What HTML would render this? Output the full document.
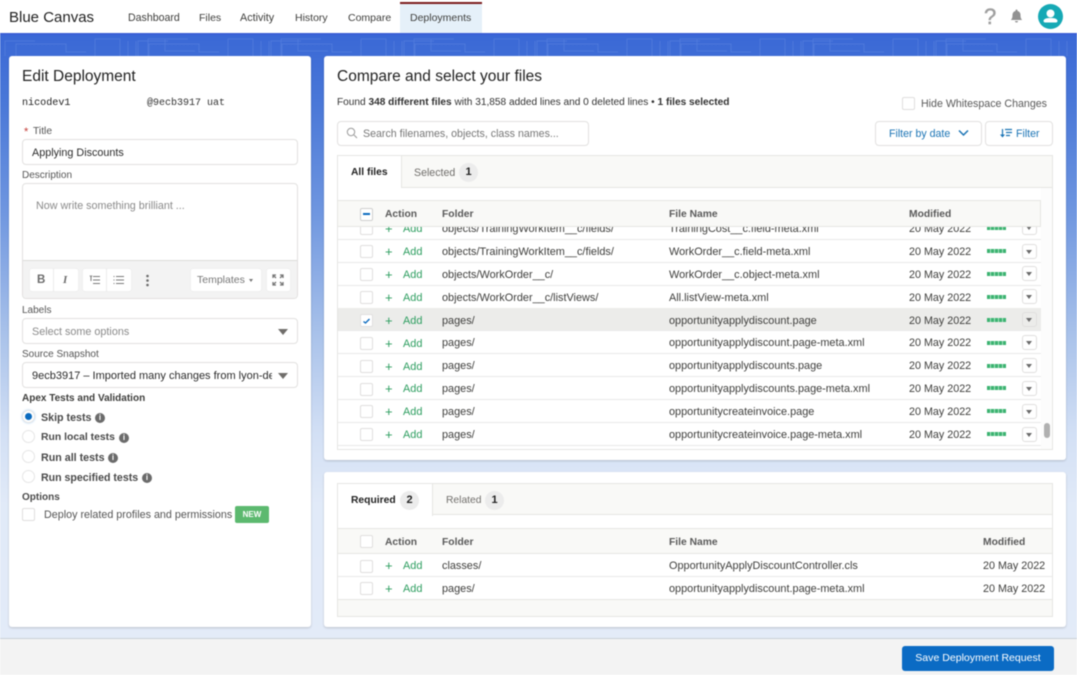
<!DOCTYPE html>
<html><head><meta charset="utf-8"><style>
*{box-sizing:border-box}
html,body{margin:0;padding:0;background:#fff}
#w{width:1077px;height:675px;position:relative;overflow:hidden;font-family:"Liberation Sans",sans-serif;font-size:10.9px;color:#3e3e3c;background:#fff;filter:blur(.45px)}
body{width:1077px;height:675px;overflow:hidden}
.a,.t{position:absolute}
.t{white-space:nowrap;line-height:14px}
.b{font-weight:bold}
.box{position:absolute;background:#fff;border:1px solid #e2e1e0;border-radius:4px}
.cb{position:absolute;width:13px;height:13px;background:#fff;border:1px solid #e0dfde;border-radius:2px}
.row{position:absolute;left:338px;width:703px;height:23px;border-bottom:1px solid #e8e8e8;background:#fff}
.plus{position:absolute;color:#2e9e60;font-size:13px;line-height:14px}
.add{color:#2e9e60}
.dt{font-size:10.75px}
.dots{position:absolute;left:987px;width:19px;height:4px;background:repeating-linear-gradient(90deg,#3cb371 0 3px,#a5dfbf 3px 4px)}
.dd{position:absolute;left:1022px;width:15px;height:15px;background:#fff;border:1px solid #e0dfde;border-radius:3px}
.dd:after{content:"";position:absolute;left:3px;top:5px;border-left:3.5px solid transparent;border-right:3.5px solid transparent;border-top:4px solid #6b6b6b}
.arrow{position:absolute;border-left:5.500px solid transparent;border-right:5.500px solid transparent;border-top:6px solid #706e6b}
.radio{position:absolute;left:22px;width:13px;height:13px;border-radius:50%;background:#fff;border:1px solid #e6e6e6}
.i{position:absolute;width:10px;height:10px;border-radius:50%;background:#6b6b6b;color:#fff;font-size:8px;line-height:10px;text-align:center;font-weight:bold}
.pill{position:absolute;width:19px;height:19px;border-radius:50%;background:#ececec;color:#222;font-weight:bold;text-align:center;line-height:19px;font-size:11px}
.tb{position:absolute;background:#fff;border-radius:3px;height:24px;border:1px solid #efefef}
.h{font-size:10.300px;color:#5a5a5a;font-weight:bold}
</style></head><body><div id="w">

<!-- background -->
<div class="a" style="left:0;top:34px;width:1077px;height:606px;background:linear-gradient(180deg,#3a68d6 0,#4a78d8 70px,#7097e0 180px,#a9c2ea 300px,#d3e0f5 400px,#e1eaf8 470px,#e3ebf8 606px)"></div>
<svg class="a" style="left:0;top:36px" width="1077" height="20"><g fill="none" stroke="#7fa2ea" stroke-width="1" opacity=".25"><path d="M5 20V5h30M16 20V8h50v8h20M95 20V3h25v17M128 20V5M136 20V5M148 20V3h40M165 3v12h30"/><path transform="translate(133 0)" d="M5 20V5h30M16 20V8h50v8h20M95 20V3h25v17M128 20V5M136 20V5M148 20V3h40M165 3v12h30"/><path transform="translate(266 0)" d="M5 20V5h30M16 20V8h50v8h20M95 20V3h25v17M128 20V5M136 20V5M148 20V3h40M165 3v12h30"/><path transform="translate(399 0)" d="M5 20V5h30M16 20V8h50v8h20M95 20V3h25v17M128 20V5M136 20V5M148 20V3h40M165 3v12h30"/><path transform="translate(532 0)" d="M5 20V5h30M16 20V8h50v8h20M95 20V3h25v17M128 20V5M136 20V5M148 20V3h40M165 3v12h30"/><path transform="translate(665 0)" d="M5 20V5h30M16 20V8h50v8h20M95 20V3h25v17M128 20V5M136 20V5M148 20V3h40M165 3v12h30"/><path transform="translate(798 0)" d="M5 20V5h30M16 20V8h50v8h20M95 20V3h25v17M128 20V5M136 20V5M148 20V3h40M165 3v12h30"/><path transform="translate(931 0)" d="M5 20V5h30M16 20V8h50v8h20M95 20V3h25v17M128 20V5M136 20V5M148 20V3h40M165 3v12h30"/></g></svg>

<!-- header -->
<div class="a" style="left:0;top:0;width:1077px;height:35px;background:#fff;border-bottom:2px solid #3a5fd6"></div>
<div class="t" style="left:9px;top:9px;font-size:15px;line-height:18px;color:#222">Blue Canvas</div>
<div class="t" style="left:128px;top:11px;font-size:10.6px">Dashboard</div>
<div class="t" style="left:199px;top:11px;font-size:10.5px">Files</div>
<div class="t" style="left:240px;top:11px;font-size:10.8px">Activity</div>
<div class="t" style="left:295px;top:11px;font-size:10.5px">History</div>
<div class="t" style="left:348px;top:11px;font-size:10.5px">Compare</div>
<div class="a" style="left:400px;top:2px;width:82px;height:31px;background:#e5f0f9;border-top:2px solid #7c1c1c"></div>
<div class="t" style="left:410px;top:11px;font-size:10.5px">Deployments</div>
<div class="t" style="left:984px;top:5px;font-size:22px;line-height:23px;color:#a0a0a0;-webkit-text-stroke:.5px #a0a0a0">?</div>
<svg class="a" style="left:1009px;top:8px" width="15" height="16" viewBox="0 0 15 15"><path fill="#929292" d="M7.500 1a1 1 0 0 1 1 1v.5c2 .5 3 2 3 4 0 3 .7 4 1.700 5H1.800c1-1 1.700-2 1.700-5 0-2 1-3.500 3-4V2a1 1 0 0 1 1-1zM6 12.500h3a1.500 1.500 0 0 1-3 0z"/></svg>
<svg class="a" style="left:1038px;top:4px" width="25" height="25" viewBox="0 0 25 25"><circle cx="12.500" cy="12.500" r="12.500" fill="#16a9b5"/><circle cx="12.500" cy="9.500" r="4" fill="#fff"/><path fill="#fff" d="M5.500 16.500c1-2 3-2.500 7-2.500s6 .5 7 2.500c0 1.500-.5 2-2 2H7.500c-1.500 0-2-.5-2-2z"/></svg>

<!-- left panel -->
<div class="a" style="left:9px;top:56px;width:302px;height:571px;background:#fff;border-radius:3px;box-shadow:0 1px 2px rgba(0,0,0,.18)"></div>
<div class="t" style="left:22px;top:67px;font-size:15.500px;line-height:19px;color:#222">Edit Deployment</div>
<div class="t" style="left:22px;top:97px;font-family:'Liberation Mono',monospace;font-size:10.100px;color:#222">nicodev1</div>
<div class="t" style="left:147px;top:97px;font-family:'Liberation Mono',monospace;font-size:10px;color:#333">@9ecb3917 uat</div>
<div class="t" style="left:24px;top:125px;color:#c23934;font-size:11px">*</div>
<div class="t" style="left:33px;top:125px;font-size:10.300px;color:#555">Title</div>
<div class="box" style="left:22px;top:139px;width:276px;height:26px"></div>
<div class="t" style="left:32px;top:146px;font-size:10.800px;color:#2b2b2b">Applying Discounts</div>
<div class="t" style="left:22px;top:169px;font-size:10px;color:#555">Description</div>
<div class="box" style="left:22px;top:183px;width:276px;height:116px"></div>
<div class="t" style="left:36px;top:199px;font-size:10.750px;color:#8a8a8a">Now write something brilliant ...</div>
<div class="a" style="left:23px;top:260px;width:274px;height:38px;background:#f3f3f3;border-top:1px solid #dddbda;border-radius:0 0 3px 3px"></div>
<div class="tb" style="left:29px;top:268px;width:50px"></div><div class="a" style="left:53px;top:268px;width:1px;height:24px;background:#ececec"></div>
<div class="t b" style="left:37px;top:273px;font-size:11.500px;color:#6b6b6b">B</div>
<div class="t" style="left:63px;top:273px;font-size:11px;color:#6b6b6b;font-style:italic;font-family:'Liberation Serif',serif;font-weight:bold">I</div>
<div class="tb" style="left:82px;top:268px;width:50px"></div><div class="a" style="left:106px;top:268px;width:1px;height:24px;background:#ececec"></div>
<svg class="a" style="left:89px;top:274px" width="12" height="12"><path stroke="#7a7a7a" fill="none" d="M4 2.500h7M4 6h7M4 9.500h7M1 1.500l1 1.500 1-1.500M2 3v4"/></svg>
<svg class="a" style="left:113px;top:274px" width="12" height="12"><path stroke="#7a7a7a" fill="none" d="M3 2.500h8M3 6h8M3 9.500h8M.5 2.500h1M.5 6h1M.5 9.500h1"/></svg>
<svg class="a" style="left:145px;top:274px" width="5" height="13"><circle cx="2.500" cy="2" r="1.300" fill="#6b6b6b"/><circle cx="2.500" cy="6.500" r="1.300" fill="#6b6b6b"/><circle cx="2.500" cy="11" r="1.300" fill="#6b6b6b"/></svg>
<div class="tb" style="left:190px;top:268px;width:72px"></div>
<div class="t" style="left:197px;top:273px;font-size:10.500px;color:#777">Templates</div>
<div class="a" style="left:249px;top:279px;border-left:2.500px solid transparent;border-right:2.500px solid transparent;border-top:3px solid #777"></div>
<div class="tb" style="left:266px;top:268px;width:25px"></div>
<svg class="a" style="left:272px;top:274px" width="12" height="12"><path stroke="#777" stroke-width="1.300" fill="none" d="M1 4V1h3M8 1h3v3M11 8v3H8M4 11H1V8M1 1l3 3M11 1L8 4M11 11L8 8M1 11l3-3"/></svg>
<div class="t" style="left:22px;top:304px;font-size:10px;color:#555">Labels</div>
<div class="box" style="left:22px;top:318px;width:276px;height:26px"></div>
<div class="t" style="left:32px;top:325px;font-size:10.800px;color:#8a8a8a">Select some options</div>
<div class="arrow" style="left:278px;top:329px"></div>
<div class="t" style="left:22px;top:348px;font-size:10px;color:#555">Source Snapshot</div>
<div class="box" style="left:22px;top:362px;width:276px;height:26px"></div>
<div class="t" style="left:32px;top:369px;width:240px;overflow:hidden;font-size:11px;color:#2b2b2b">9ecb3917 – Imported many changes from lyon-dev</div>
<div class="arrow" style="left:278px;top:373px"></div>
<div class="t b" style="left:22px;top:392px;font-size:10px;color:#3e3e3c">Apex Tests and Validation</div>
<div class="radio" style="top:410px;box-shadow:0 0 2px #a8cdf0"></div><div class="a" style="left:25px;top:413px;width:7px;height:7px;border-radius:50%;background:#0b6bbf"></div>
<div class="t b" style="left:41px;top:411px;font-size:10.700px;color:#4a4a4a">Skip tests</div><div class="i" style="left:95px;top:413px">i</div>
<div class="radio" style="top:430px"></div>
<div class="t b" style="left:41px;top:431px;font-size:10.400px;color:#4a4a4a">Run local tests</div><div class="i" style="left:119px;top:433px">i</div>
<div class="radio" style="top:450px"></div>
<div class="t b" style="left:41px;top:451px;font-size:10.700px;color:#4a4a4a">Run all tests</div><div class="i" style="left:108px;top:453px">i</div>
<div class="radio" style="top:470px"></div>
<div class="t b" style="left:41px;top:471px;font-size:10.600px;color:#4a4a4a">Run specified tests</div><div class="i" style="left:142px;top:473px">i</div>
<div class="t b" style="left:22px;top:491px;font-size:10px;color:#4a4a4a">Options</div>
<div class="cb" style="left:22px;top:508px"></div>
<div class="t" style="left:44px;top:508px;font-size:10.750px;color:#555">Deploy related profiles and permissions</div>
<div class="a b" style="left:235px;top:506px;width:34px;height:17px;background:#5cb96f;border-radius:2px;color:#fff;font-size:8px;line-height:17px;text-align:center">NEW</div>

<!-- right panel -->
<div class="a" style="left:324px;top:56px;width:742px;height:404px;background:#fff;border-radius:3px;box-shadow:0 1px 2px rgba(0,0,0,.18)"></div>
<div class="t" style="left:337px;top:67px;font-size:15.500px;line-height:19px;color:#222">Compare and select your files</div>
<div class="t" style="left:337px;top:96px;font-size:10.120px;color:#333">Found <b>348 different files</b> with 31,858 added lines and 0 deleted lines • <b>1 files selected</b></div>
<div class="cb" style="left:902px;top:97px"></div>
<div class="t" style="left:921px;top:97px;font-size:10.650px;color:#5a5a5a">Hide Whitespace Changes</div>
<div class="box" style="left:337px;top:121px;width:252px;height:25px"></div>
<svg class="a" style="left:346px;top:127px" width="12" height="12"><circle cx="5" cy="5" r="3.700" stroke="#9a9a9a" fill="none"/><path d="M8 8l3 3" stroke="#9a9a9a"/></svg>
<div class="t" style="left:363px;top:127px;font-size:10.650px;color:#777">Search filenames, objects, class names...</div>
<div class="box" style="left:875px;top:121px;width:107px;height:25px"></div>
<div class="t" style="left:889px;top:127px;font-size:10.600px;color:#1b74b5">Filter by date</div>
<svg class="a" style="left:958px;top:129px" width="11" height="8"><path d="M1 1.500l4.500 4.500 4.500-4.500" stroke="#1b74b5" stroke-width="1.500" fill="none"/></svg>
<div class="box" style="left:985px;top:121px;width:68px;height:25px"></div>
<svg class="a" style="left:1000px;top:128px" width="12" height="11"><path d="M5 1.500h7M6 4.500h6M6 7.500h4" stroke="#1b74b5" stroke-width="1.200" fill="none"/><path d="M2.500 1v6" stroke="#1b74b5" stroke-width="1.200"/><path d="M0 6.500h5l-2.500 3z" fill="#1b74b5"/></svg>
<div class="t" style="left:1016px;top:127px;font-size:10.600px;color:#1b74b5">Filter</div>

<!-- tabs 1 -->
<div class="a" style="left:337px;top:155px;width:716px;height:33px;background:#f9f9f7;border:1px solid #e6e6e3"></div>
<div class="a" style="left:338px;top:156px;width:64px;height:32px;background:#fff;border-right:1px solid #e6e6e3"></div>
<div class="t b" style="left:351px;top:166px;font-size:10.300px;color:#222">All files</div>
<div class="t" style="left:414px;top:166px;font-size:10.600px;color:#706e6b">Selected</div>
<div class="pill" style="left:459px;top:163px">1</div>
<div class="a" style="left:337px;top:188px;width:1px;height:261px;background:#e6e6e3"></div>

<!-- table 1 rows -->
<div class="row" style="top:217px"></div>
<div class="cb" style="left:360px;top:222px"></div><div class="plus" style="left:385px;top:222px">+</div><div class="t add" style="left:403px;top:222px">Add</div><div class="t" style="left:442px;top:222px">objects/TrainingWorkItem__c/fields/</div><div class="t" style="left:669px;top:222px">TrainingCost__c.field-meta.xml</div><div class="t dt" style="left:909px;top:222px">20 May 2022</div><div class="dots" style="top:226px"></div><div class="dd" style="top:220px"></div>

<div class="row" style="top:240px"></div>
<div class="cb" style="left:360px;top:245px"></div><div class="plus" style="left:385px;top:245px">+</div><div class="t add" style="left:403px;top:245px">Add</div><div class="t" style="left:442px;top:245px">objects/TrainingWorkItem__c/fields/</div><div class="t" style="left:669px;top:245px">WorkOrder__c.field-meta.xml</div><div class="t dt" style="left:909px;top:245px">20 May 2022</div><div class="dots" style="top:249px"></div><div class="dd" style="top:244px"></div>

<div class="row" style="top:263px"></div>
<div class="cb" style="left:360px;top:268px"></div><div class="plus" style="left:385px;top:268px">+</div><div class="t add" style="left:403px;top:268px">Add</div><div class="t" style="left:442px;top:268px">objects/WorkOrder__c/</div><div class="t" style="left:669px;top:268px">WorkOrder__c.object-meta.xml</div><div class="t dt" style="left:909px;top:268px">20 May 2022</div><div class="dots" style="top:272px"></div><div class="dd" style="top:266px"></div>

<div class="row" style="top:286px"></div>
<div class="cb" style="left:360px;top:291px"></div><div class="plus" style="left:385px;top:291px">+</div><div class="t add" style="left:403px;top:291px">Add</div><div class="t" style="left:442px;top:291px">objects/WorkOrder__c/listViews/</div><div class="t" style="left:669px;top:291px">All.listView-meta.xml</div><div class="t dt" style="left:909px;top:291px">20 May 2022</div><div class="dots" style="top:295px"></div><div class="dd" style="top:289px"></div>

<div class="row" style="top:308px;background:#ececea"></div>
<div class="cb" style="left:360px;top:314px"></div><svg class="a" style="left:362px;top:317px" width="9" height="8"><path d="M1.500 4.500l2 1.500L7.500 2" stroke="#0b6bbf" stroke-width="1.400" fill="none"/></svg><div class="plus" style="left:385px;top:314px">+</div><div class="t add" style="left:403px;top:314px">Add</div><div class="t" style="left:442px;top:314px">pages/</div><div class="t" style="left:669px;top:314px">opportunityapplydiscount.page</div><div class="t dt" style="left:909px;top:314px">20 May 2022</div><div class="dots" style="top:318px"></div><div class="dd" style="top:312px;background:#ececea"></div>

<div class="row" style="top:331px"></div>
<div class="cb" style="left:360px;top:337px"></div><div class="plus" style="left:385px;top:337px">+</div><div class="t add" style="left:403px;top:337px">Add</div><div class="t" style="left:442px;top:336px">pages/</div><div class="t" style="left:669px;top:336px">opportunityapplydiscount.page-meta.xml</div><div class="t dt" style="left:909px;top:336px">20 May 2022</div><div class="dots" style="top:341px"></div><div class="dd" style="top:335px"></div>

<div class="row" style="top:354px"></div>
<div class="cb" style="left:360px;top:360px"></div><div class="plus" style="left:385px;top:360px">+</div><div class="t add" style="left:403px;top:360px">Add</div><div class="t" style="left:442px;top:359px">pages/</div><div class="t" style="left:669px;top:359px">opportunityapplydiscounts.page</div><div class="t dt" style="left:909px;top:359px">20 May 2022</div><div class="dots" style="top:364px"></div><div class="dd" style="top:358px"></div>

<div class="row" style="top:377px"></div>
<div class="cb" style="left:360px;top:383px"></div><div class="plus" style="left:385px;top:382px">+</div><div class="t add" style="left:403px;top:382px">Add</div><div class="t" style="left:442px;top:382px">pages/</div><div class="t" style="left:669px;top:382px">opportunityapplydiscounts.page-meta.xml</div><div class="t dt" style="left:909px;top:382px">20 May 2022</div><div class="dots" style="top:386px"></div><div class="dd" style="top:381px"></div>

<div class="row" style="top:400px"></div>
<div class="cb" style="left:360px;top:405px"></div><div class="plus" style="left:385px;top:405px">+</div><div class="t add" style="left:403px;top:405px">Add</div><div class="t" style="left:442px;top:405px">pages/</div><div class="t" style="left:669px;top:405px">opportunitycreateinvoice.page</div><div class="t dt" style="left:909px;top:405px">20 May 2022</div><div class="dots" style="top:409px"></div><div class="dd" style="top:404px"></div>

<div class="row" style="top:423px"></div>
<div class="cb" style="left:360px;top:428px"></div><div class="plus" style="left:385px;top:428px">+</div><div class="t add" style="left:403px;top:428px">Add</div><div class="t" style="left:442px;top:428px">pages/</div><div class="t" style="left:669px;top:428px">opportunitycreateinvoice.page-meta.xml</div><div class="t dt" style="left:909px;top:428px">20 May 2022</div><div class="dots" style="top:432px"></div><div class="dd" style="top:427px"></div>

<div class="a" style="left:337px;top:449px;width:716px;height:1px;background:#e6e6e3"></div>
<div class="a" style="left:1041px;top:188px;width:12px;height:261px;background:#fcfcfc;border-right:1px solid #e6e6e3"></div>
<div class="a" style="left:1044px;top:423px;width:6px;height:15px;background:#b0b0b0;border-radius:3px"></div>

<!-- table 1 header -->
<div class="a" style="left:337px;top:200px;width:704px;height:27px;background:#f9f9f7;border:1px solid #e6e6e3"></div>
<div class="cb" style="left:360px;top:208px;border-color:#cfcfcf"></div><div class="a" style="left:363px;top:213px;width:7px;height:2px;background:#0b6bbf"></div>
<div class="t h" style="left:385px;top:208px">Action</div>
<div class="t h" style="left:442px;top:208px">Folder</div>
<div class="t h" style="left:669px;top:208px">File Name</div>
<div class="t h" style="left:909px;top:208px">Modified</div>

<!-- bottom panel -->
<div class="a" style="left:324px;top:472px;width:742px;height:155px;background:#fff;border-radius:3px;box-shadow:0 1px 2px rgba(0,0,0,.18)"></div>
<div class="a" style="left:337px;top:483px;width:716px;height:134px;background:#fff;border:1px solid #e6e6e3"></div>
<div class="a" style="left:338px;top:484px;width:714px;height:31px;background:#f9f9f7;border-bottom:1px solid #e6e6e3"></div>
<div class="a" style="left:338px;top:484px;width:95px;height:32px;background:#fff;border-right:1px solid #e6e6e3"></div>
<div class="t b" style="left:351px;top:494px;font-size:10.300px;color:#222">Required</div>
<div class="pill" style="left:400px;top:491px">2</div>
<div class="t" style="left:446px;top:494px;font-size:10.300px;color:#706e6b">Related</div>
<div class="pill" style="left:485px;top:491px">1</div>
<div class="a" style="left:338px;top:528px;width:714px;height:26px;background:#f9f9f7;border-top:1px solid #e6e6e3;border-bottom:1px solid #e6e6e3"></div>
<div class="cb" style="left:360px;top:535px"></div>
<div class="t h" style="left:385px;top:536px">Action</div>
<div class="t h" style="left:442px;top:536px">Folder</div>
<div class="t h" style="left:669px;top:536px">File Name</div>
<div class="t h" style="left:983px;top:536px">Modified</div>
<div class="cb" style="left:360px;top:560px"></div><div class="plus" style="left:385px;top:559px">+</div><div class="t add" style="left:403px;top:559px">Add</div><div class="t" style="left:442px;top:559px">classes/</div><div class="t" style="left:669px;top:559px">OpportunityApplyDiscountController.cls</div><div class="t dt" style="left:983px;top:559px">20 May 2022</div>
<div class="a" style="left:338px;top:576px;width:714px;height:1px;background:#e8e8e8"></div>
<div class="cb" style="left:360px;top:582px"></div><div class="plus" style="left:385px;top:582px">+</div><div class="t add" style="left:403px;top:582px">Add</div><div class="t" style="left:442px;top:582px">pages/</div><div class="t" style="left:669px;top:582px">opportunityapplydiscount.page-meta.xml</div><div class="t dt" style="left:983px;top:582px">20 May 2022</div>
<div class="a" style="left:338px;top:599px;width:714px;height:17px;background:#f9f9f7;border-top:1px solid #e6e6e3"></div>

<!-- footer -->
<div class="a" style="left:0;top:638px;width:1077px;height:37px;background:#f3f3f3;border-top:1px solid #c9d0d8"></div>
<div class="a" style="left:902px;top:646px;width:152px;height:25px;background:#0b6bc4;border-radius:3px;color:#fff;font-size:10.550px;line-height:25px;text-align:center">Save Deployment Request</div>
</div></body></html>
